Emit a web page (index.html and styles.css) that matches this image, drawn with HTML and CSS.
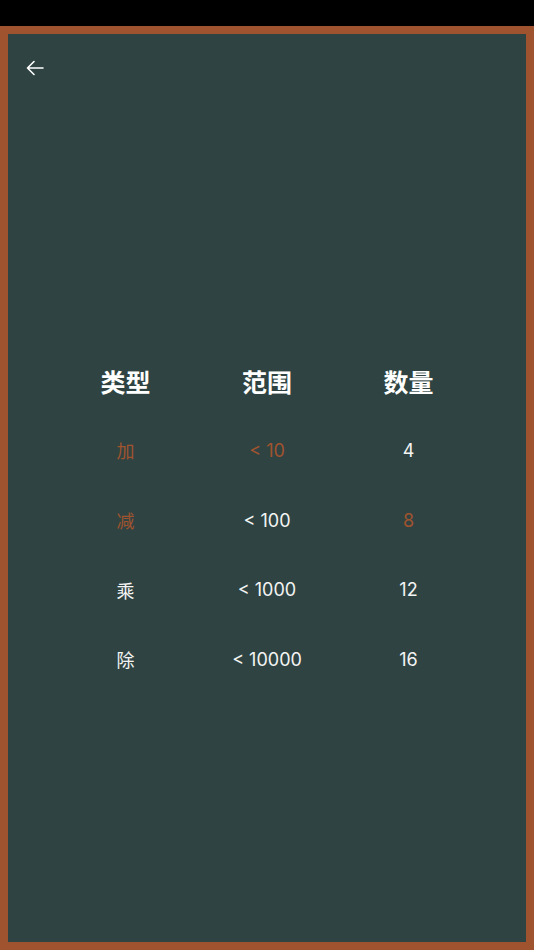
FILE: index.html
```html
<!DOCTYPE html>
<html>
<head>
  <meta charset="utf-8" />
  <meta name="viewport" content="width=device-width, initial-scale=1.0">
  <title>设置</title>
  <link rel="stylesheet" href="styles.css">
</head>
<body>
  <div class="status-bar"></div>
  <div class="board">
    <div class="app-bar">
      <button class="back-btn">
        <svg viewBox="0 0 24 24">
          <path d="M20 12H4.5M11 5.5L4.5 12l6.5 6.5"/>
        </svg>
      </button>
    </div>

    <div class="content">
      <div class="table">
        <div class="cell head">类型</div>
        <div class="cell head">范围</div>
        <div class="cell head">数量</div>

        <div class="cell active">加</div>
        <div class="cell active">&lt; 10</div>
        <div class="cell">4</div>

        <div class="cell active">减</div>
        <div class="cell">&lt; 100</div>
        <div class="cell active">8</div>

        <div class="cell">乘</div>
        <div class="cell">&lt; 1000</div>
        <div class="cell">12</div>

        <div class="cell">除</div>
        <div class="cell">&lt; 10000</div>
        <div class="cell">16</div>
      </div>
    </div>
  </div>
</body>
</html>
```

FILE: styles.css
```css
:root {
  --board: #2f4442;
  --frame: #a0532f;
  --text: #f4f4f4;
}

* {
  margin: 0;
  padding: 0;
  box-sizing: border-box;
}

html, body {
  height: 100%;
}

body {
  background: var(--frame);
  display: flex;
  flex-direction: column;
  font-family: Inter, "Noto Sans CJK SC", sans-serif;
  color: var(--text);
}

.status-bar {
  height: 26px;
  background: #000;
}

.board {
  flex: 1;
  margin: 8px;
  background: var(--board);
  display: flex;
  flex-direction: column;
}

.app-bar {
  height: 68px;
  display: flex;
  align-items: center;
  padding-left: 15px;
}

.back-btn {
  width: 24px;
  height: 24px;
  background: none;
  border: none;
  cursor: pointer;
}

.back-btn svg {
  width: 24px;
  height: 24px;
  fill: none;
  stroke: white;
  stroke-width: 1.6;
  stroke-linecap: round;
  stroke-linejoin: round;
}

.content {
  flex: 1;
  display: flex;
  align-items: center;
  justify-content: center;
  padding-bottom: 4px;
}

.table {
  display: grid;
  grid-template-columns: repeat(3, 141.5px);
  grid-auto-rows: 69.7px;
}

.cell {
  display: flex;
  align-items: center;
  justify-content: center;
  font-size: 18px;
}

.head {
  font-size: 25px;
  font-weight: 700;
  color: #fff;
}

.active {
  color: var(--frame);
}
```
